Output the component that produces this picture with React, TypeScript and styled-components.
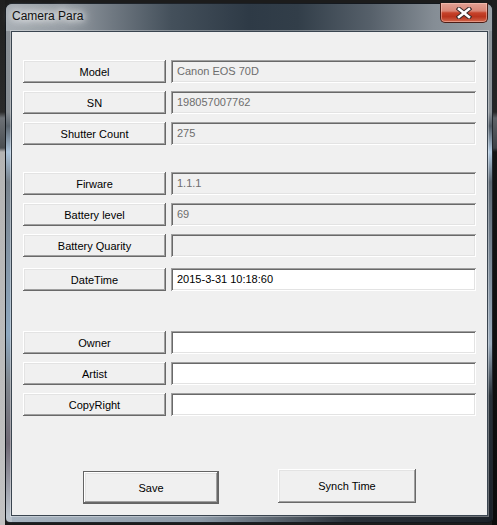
import React from "react";
import styled, { createGlobalStyle } from "styled-components";

const GlobalStyle = createGlobalStyle`
  html, body {
    margin: 0;
    padding: 0;
    background: #1c1c1c;
  }
  * {
    box-sizing: border-box;
  }
`;

const Desktop = styled.div`
	width: 497px;
	height: 525px;
	padding: 3px 4px 2px 5px;
	background:
		linear-gradient(
				180deg,
				#202020 0,
				#2a2a2a 112px,
				#6d7176 118px,
				#4a4e52 148px,
				#b4b4b4 152px,
				#c2c2c2 520px
			)
			left top / 5px 100% no-repeat,
		linear-gradient(
				180deg,
				#1e1e1e 0,
				#252525 112px,
				#5d6166 118px,
				#3d4146 148px,
				#141414 152px,
				#0c0c0c 520px
			)
			right top / 5px 100% no-repeat,
		#1c1c1c;
`;

const Window = styled.div`
	height: 100%;
	display: flex;
	flex-direction: column;
	border: 1px solid rgba(18, 22, 28, 0.9);
	border-radius: 7px 7px 5px 5px;
	padding: 0 4px 6px 5px;
	background:
		linear-gradient(
				180deg,
				#8b9197 0,
				#868c92 108px,
				#59626b 122px,
				#aac3db 148px,
				#77818b 178px,
				#8ea8c0 330px,
				#7f858c 380px,
				#6f6874 440px,
				#bac3cc 512px
			)
			left top / 6px 100% no-repeat,
		linear-gradient(
				180deg,
				#8e959b 0,
				#8a9197 108px,
				#4f5963 122px,
				#b2cae1 148px,
				#5b6671 178px,
				#9aabbc 340px,
				#283139 392px,
				#1b2129 512px
			)
			right top / 5px 100% no-repeat,
		linear-gradient(90deg, #a9b5c1 0%, #8c99a6 40%, #2b323a 70%, #1c2229 100%);
`;

const TitleBar = styled.div`
	height: 27px;
	margin: 0 -4px 0 -5px;
	padding: 0 4px 0 6px;
	display: flex;
	align-items: flex-start;
	border-radius: 6px 6px 0 0;
	background: linear-gradient(
		90deg,
		#a7aeb4 0%,
		#959ca3 12%,
		#6f7881 22%,
		#44505b 34%,
		#2e3a46 50%,
		#323e49 60%,
		#56606a 75%,
		#858d95 88%,
		#9aa1a7 100%
	);
`;

const Title = styled.span`
	padding-top: 5px;
	font-family: "Liberation Sans", Arial, sans-serif;
	font-size: 12px;
	line-height: 15px;
	color: #111;
	text-shadow:
		0 0 6px #fff,
		0 0 10px #fff,
		0 0 14px rgba(255, 255, 255, 0.9);
`;

const CloseButton = styled.div`
	margin: -1px 0 0 auto;
	width: 48px;
	height: 20px;
	display: flex;
	align-items: center;
	justify-content: center;
	border: 1px solid #4b1d16;
	border-top: none;
	border-radius: 0 0 5px 5px;
	background: linear-gradient(
		180deg,
		#e3a295 0%,
		#d98676 42%,
		#c6422a 52%,
		#b9341d 72%,
		#d2684e 100%
	);
	box-shadow: inset 0 0 0 1px rgba(255, 210, 200, 0.45);
`;

const Client = styled.div`
	flex: 1;
	display: flex;
	flex-direction: column;
	padding: 28px 11px 11px 11px;
	background: #f0f0f0;
	border: 1px solid #3a4550;
	box-shadow: 0 0 0 1px rgba(255, 255, 255, 0.35);
	font-family: "Liberation Sans", Arial, sans-serif;
	font-size: 11px;
`;

const Group = styled.div<{ $top?: number }>`
	display: flex;
	flex-direction: column;
	gap: 8px;
	margin-top: ${(p) => p.$top ?? 0}px;
`;

const Row = styled.div`
	display: flex;
	gap: 5px;
	height: 23px;
`;

const Label = styled.button`
	width: 143px;
	height: 23px;
	padding: 0;
	border: none;
	background: #f0f0f0;
	font-family: "Liberation Sans", Arial, sans-serif;
	font-size: 11px;
	color: #000;
	box-shadow:
		inset -1px -1px #696969,
		inset 1px 1px #ffffff,
		inset -2px -2px #a0a0a0,
		inset 2px 2px #e3e3e3;
`;

const Field = styled.input<{ $readonly?: boolean }>`
	width: 305px;
	height: 23px;
	margin: 0;
	padding: 0 4px 1px 6px;
	border: none;
	outline: none;
	font-family: "Liberation Sans", Arial, sans-serif;
	font-size: 11px;
	color: ${(p) => (p.$readonly ? "#6d6d6d" : "#000")};
	background: ${(p) => (p.$readonly ? "#f0f0f0" : "#ffffff")};
	box-shadow:
		inset 1px 1px #a0a0a0,
		inset -1px -1px #ffffff,
		inset 2px 2px #696969,
		inset -2px -2px #e3e3e3;
`;

const Footer = styled.div`
	margin-top: auto;
	display: flex;
	align-items: flex-end;
	gap: 59px;
	padding-left: 60px;
`;

const ActionButton = styled.button<{ $w: number; $h: number; $default?: boolean; $lift?: number }>`
	width: ${(p) => p.$w}px;
	height: ${(p) => p.$h}px;
	margin-bottom: ${(p) => p.$lift ?? 0}px;
	padding: 0;
	border: ${(p) => (p.$default ? "1px solid #646464" : "none")};
	background: #f0f0f0;
	font-family: "Liberation Sans", Arial, sans-serif;
	font-size: 11px;
	color: #000;
	box-shadow:
		inset -1px -1px #696969,
		inset 1px 1px #ffffff,
		inset -2px -2px #a0a0a0,
		inset 2px 2px #e3e3e3;
`;

type Item = { label: string; value: string; readonly: boolean };

const camera: Item[] = [
	{ label: "Model", value: "Canon EOS 70D", readonly: true },
	{ label: "SN", value: "198057007762", readonly: true },
	{ label: "Shutter Count", value: "275", readonly: true },
];

const device: Item[] = [
	{ label: "Firware", value: "1.1.1", readonly: true },
	{ label: "Battery level", value: "69", readonly: true },
	{ label: "Battery Quarity", value: "", readonly: true },
];

const owner: Item[] = [
	{ label: "Owner", value: "", readonly: false },
	{ label: "Artist", value: "", readonly: false },
	{ label: "CopyRight", value: "", readonly: false },
];

function FieldRow({ item }: { item: Item }) {
	return (
		<Row>
			<Label type="button">{item.label}</Label>
			<Field
				$readonly={item.readonly}
				readOnly={item.readonly}
				defaultValue={item.value}
			/>
		</Row>
	);
}

export default function App() {
	return (
		<>
			<GlobalStyle />
			<Desktop>
				<Window>
					<TitleBar>
						<Title>Camera Para</Title>
						<CloseButton>
							<svg width="16" height="12" viewBox="0 0 16 12">
								<path
									d="M3 2 L13 10 M13 2 L3 10"
									stroke="#3b2a2a"
									strokeWidth="4.6"
									strokeLinecap="square"
								/>
								<path
									d="M3 2 L13 10 M13 2 L3 10"
									stroke="#ffffff"
									strokeWidth="2.6"
									strokeLinecap="square"
								/>
							</svg>
						</CloseButton>
					</TitleBar>
					<Client>
						<Group>
							{camera.map((item) => (
								<FieldRow key={item.label} item={item} />
							))}
						</Group>
						<Group $top={27}>
							{device.map((item) => (
								<FieldRow key={item.label} item={item} />
							))}
						</Group>
						<Group $top={11}>
							<FieldRow
								item={{ label: "DateTime", value: "2015-3-31 10:18:60", readonly: false }}
							/>
						</Group>
						<Group $top={40}>
							{owner.map((item) => (
								<FieldRow key={item.label} item={item} />
							))}
						</Group>
						<Footer>
							<ActionButton type="button" $w={136} $h={33} $default>
								Save
							</ActionButton>
							<ActionButton type="button" $w={138} $h={34} $lift={1}>
								Synch Time
							</ActionButton>
						</Footer>
					</Client>
				</Window>
			</Desktop>
		</>
	);
}
